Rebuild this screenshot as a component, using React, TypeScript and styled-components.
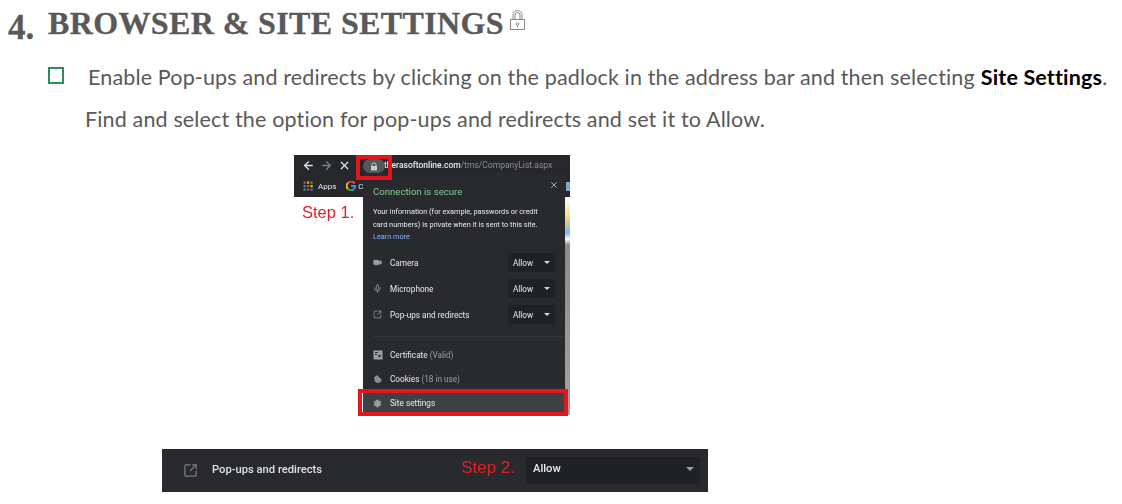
import styled, { createGlobalStyle } from "styled-components"
import { ArrowLeft, ArrowRight, Cookie, Mic, Settings, SquareArrowOutUpRight, Video, X } from "lucide-react"

const GlobalStyle = createGlobalStyle`
  html, body {
    margin: 0;
    padding: 0;
    background: #fff;
  }
`

const Page = styled.div`
  width: 1122px;
  height: 504px;
  overflow: hidden;
  display: flex;
  flex-direction: column;
  font-family: Lato, "Open Sans", sans-serif;
  color: #595959;
`

const Heading = styled.h1`
  display: flex;
  align-items: flex-start;
  margin: 0;
  padding: 5px 0 0 8px;
  height: 46px;
  box-sizing: border-box;
  font-family: "Liberation Serif", Georgia, serif;
  font-weight: bold;
  font-size: 32px;
  line-height: 36px;
  color: #595959;
  -webkit-text-stroke: 0.3px #595959;
`

const Number = styled.span`
  width: 40px;
  margin-top: 5px;
  font-size: 35px;
`

const HeadingText = styled.span`
  letter-spacing: 0.38px;
`

const HeadingLock = styled.svg`
  width: 19px;
  height: 22px;
  margin: 4px 0 0 4px;
`

const Bullet = styled.div`
  display: flex;
  align-items: center;
  height: 30px;
  margin-top: 16px;
  padding-left: 48px;
  font-size: 21.5px;
  letter-spacing: 0.15px;
  white-space: nowrap;
`

const Box = styled.span`
  width: 16px;
  height: 17px;
  margin: -4px 24px 0 0;
  border: 2px solid #2e8b57;
  box-sizing: border-box;
`

const Strong = styled.b`
  margin: 0 0 0 6px;
  color: #000;
`

const Para = styled.div`
  height: 30px;
  margin-top: 12px;
  padding-left: 85px;
  font-size: 21.5px;
  line-height: 30px;
  letter-spacing: 0.15px;
  white-space: nowrap;
`

const Shot = styled.div`
  position: relative;
  width: 276px;
  height: 260px;
  margin: 21px 0 0 294px;
  font-family: Roboto, sans-serif;
  filter: blur(0.35px);
`

const ToolbarTop = styled.div`
  display: flex;
  align-items: center;
  gap: 5px;
  height: 20px;
  padding-left: 8px;
  background: #26272a;
  color: #d8dadd;
`

const ToolbarIcon = styled.span<{ $dim?: boolean }>`
  display: flex;
  color: ${(p) => (p.$dim ? "#7b7d80" : "#e0e2e5")};
`

const Url = styled.span`
  margin-left: 28px;
  font-size: 8.5px;
  color: #8b8d90;
  white-space: nowrap;
`

const UrlHost = styled.span`
  color: #e8eaed;
  font-weight: 500;
`

const Bookmarks = styled.div`
  display: flex;
  align-items: center;
  height: 22px;
  padding-left: 9px;
  background: #26272a;
  font-size: 8px;
  color: #e8eaed;
`

const AppsGrid = styled.svg`
  width: 10px;
  height: 10px;
  margin-right: 5px;
`

const GoogleMark = styled.svg`
  width: 10px;
  height: 10px;
  margin: 0 2px 0 10px;
`

const BookmarkEnd = styled.span`
  width: 4px;
  height: 9px;
  margin-left: auto;
  background: #7fa6d6;
`

const ShotBody = styled.div`
  display: flex;
  justify-content: space-between;
  height: 218px;
  background: #fff;
`

const Step = styled.span`
  font-family: "Liberation Sans", Arial, sans-serif;
  font-size: 16.5px;
  line-height: 18px;
  color: #e3202a;
  white-space: nowrap;
`

const StepOne = styled(Step)`
  margin: 6px 0 0 8px;
`

const Sliver = styled.div`
  width: 5px;
  background: linear-gradient(#fff 0, #f4d98c 20px, #7fb7e6 36px, #fff 42px, #8f8b86 48px, #a5a29e 100%);
`

const Popup = styled.div`
  position: absolute;
  top: 18px;
  left: 69px;
  width: 202px;
  height: 242px;
  display: flex;
  flex-direction: column;
  background: #292a2d;
  color: #e8eaed;
`

const PopupClose = styled.span`
  position: absolute;
  top: 7px;
  right: 6px;
  display: flex;
  color: #c4c6c9;
`

const Secure = styled.div`
  margin: 12px 0 0 10px;
  font-size: 9.6px;
  line-height: 14px;
  color: #81c995;
`

const Info = styled.div`
  margin: 6px 8px 0 10px;
  font-size: 7.3px;
  line-height: 13px;
  white-space: nowrap;
`

const LearnMore = styled.div`
  margin-left: 10px;
  font-size: 7.3px;
  line-height: 11px;
  color: #8ab4f8;
`

const Permissions = styled.div`
  display: flex;
  flex-direction: column;
  gap: 7px;
  margin: 11px 0 0 10px;
  padding-bottom: 12px;
  border-bottom: 1px solid #36373a;
`

const PermissionRow = styled.div`
  display: flex;
  align-items: center;
  height: 19px;
  font-size: 8.2px;
`

const RowIcon = styled.span`
  display: flex;
  width: 17px;
  color: #9aa0a6;
`

const SmallSelect = styled.div`
  display: flex;
  align-items: center;
  justify-content: space-between;
  width: 47px;
  height: 19px;
  margin: 0 10px 0 auto;
  padding: 0 5px;
  box-sizing: border-box;
  background: #202124;
`

const Caret = styled.span<{ $size: number; $colour: string }>`
  width: 0;
  height: 0;
  border-left: ${(p) => p.$size}px solid transparent;
  border-right: ${(p) => p.$size}px solid transparent;
  border-top: ${(p) => p.$size}px solid ${(p) => p.$colour};
`

const InfoRow = styled.div<{ $active?: boolean }>`
  display: flex;
  align-items: center;
  height: 25px;
  padding-left: 10px;
  font-size: 8.2px;
  background: ${(p) => (p.$active ? "#3f4043" : "transparent")};
`

const FirstInfoRow = styled(InfoRow)`
  margin-top: 6px;
`

const Muted = styled.span`
  margin-left: 2px;
  color: #9aa0a6;
`

const Highlight = styled.div`
  position: absolute;
  box-sizing: border-box;
  border: 4px solid #e3161f;
`

const LockHighlight = styled(Highlight)`
  top: 0;
  left: 62px;
  width: 36px;
  height: 25px;
`

const LockPill = styled.span`
  position: absolute;
  top: 4px;
  left: 69px;
  width: 22px;
  height: 14px;
  display: flex;
  align-items: center;
  justify-content: center;
  border-radius: 7px;
  background: #55575a;
`

const PadLock = styled.svg`
  width: 8px;
  height: 9px;
`

const SiteHighlight = styled(Highlight)`
  top: 234px;
  left: 64px;
  width: 210px;
  height: 27px;
`

const Strip = styled.div`
  display: flex;
  align-items: center;
  width: 546px;
  height: 43px;
  margin: 34px 0 0 162px;
  padding: 0 8px 0 21px;
  box-sizing: border-box;
  background: #292a2d;
  font-family: Roboto, sans-serif;
  font-size: 11.2px;
  font-weight: 500;
  color: #dfe1e4;
  filter: blur(0.35px);
`

const StripLabel = styled.span`
  margin: -3px 0 0 14px;
`

const StepTwo = styled(Step)`
  margin: -5px 11px 0 auto;
  font-size: 17px;
  font-weight: 400;
`

const LargeSelect = styled.div`
  display: flex;
  align-items: center;
  justify-content: space-between;
  width: 174px;
  height: 27px;
  margin-top: -1px;
  padding: 0 6px 3px 7px;
  box-sizing: border-box;
  border-radius: 3px;
  background: #202124;
  color: #e8eaed;
`

const appColours = ["#ea4335", "#fbbc04", "#34a853", "#4285f4", "#ea4335", "#fbbc04", "#34a853", "#ea4335", "#4285f4"]

function CertificateIcon() {
  return (
    <svg width="10" height="10" viewBox="0 0 10 10">
      <rect x="0.5" y="0.5" width="9" height="9" fill="#9aa0a6" />
      <rect x="2" y="2" width="3" height="1" fill="#292a2d" />
      <rect x="2" y="4" width="2" height="1" fill="#292a2d" />
      <circle cx="6.5" cy="6" r="1.3" fill="#292a2d" />
    </svg>
  )
}

export default function App() {
  return (
    <Page>
      <GlobalStyle />
      <Heading>
        <Number>4.</Number>
        <HeadingText>BROWSER &amp; SITE SETTINGS</HeadingText>
        <HeadingLock viewBox="0 0 19 22" fill="none" stroke="#8a8a8a" strokeWidth="1">
          <path d="M5 10V6a4.500 4.500 0 0 1 9 0v4M7 10V6a2.500 2.500 0 0 1 5 0v4" />
          <rect x="2.500" y="10.500" width="14" height="10" />
          <circle cx="9.500" cy="15" r="1.300" />
          <path d="M9.500 16.300V18" />
        </HeadingLock>
      </Heading>
      <Bullet>
        <Box />
        Enable Pop-ups and redirects by clicking on the padlock in the address bar and then selecting
        <Strong>Site Settings</Strong>.
      </Bullet>
      <Para>Find and select the option for pop-ups and redirects and set it to Allow.</Para>
      <Shot>
        <ToolbarTop>
          <ToolbarIcon><ArrowLeft size={13} strokeWidth={2.4} /></ToolbarIcon>
          <ToolbarIcon $dim><ArrowRight size={13} strokeWidth={2.4} /></ToolbarIcon>
          <ToolbarIcon><X size={13} strokeWidth={2.4} /></ToolbarIcon>
          <Url>
            <UrlHost>therasoftonline.com</UrlHost>/tms/CompanyList.aspx
          </Url>
        </ToolbarTop>
        <Bookmarks>
          <AppsGrid viewBox="0 0 10 10">
            {appColours.map((colour, i) => (
              <rect key={i} x={(i % 3) * 3.5 + 0.5} y={Math.floor(i / 3) * 3.5 + 0.5} width="2.200" height="2.200" fill={colour} />
            ))}
          </AppsGrid>
          Apps
          <GoogleMark viewBox="0 0 10 10" fill="none" strokeWidth="2">
            <path d="M8.600 2.600A4 4 0 0 0 2 2" stroke="#ea4335" />
            <path d="M2 2a4 4 0 0 0 0 6" stroke="#fbbc04" />
            <path d="M2 8a4 4 0 0 0 6 0" stroke="#34a853" />
            <path d="M8 8a4 4 0 0 0 1-3H5" stroke="#4285f4" />
          </GoogleMark>
          C
          <BookmarkEnd />
        </Bookmarks>
        <ShotBody>
          <StepOne>Step 1.</StepOne>
          <Sliver />
        </ShotBody>
        <Popup>
          <PopupClose><X size={10} /></PopupClose>
          <Secure>Connection is secure</Secure>
          <Info>
            Your information (for example, passwords or credit
            <br />
            card numbers) is private when it is sent to this site.
          </Info>
          <LearnMore>Learn more</LearnMore>
          <Permissions>
            <PermissionRow>
              <RowIcon><Video size={9} fill="#9aa0a6" /></RowIcon>
              Camera
              <SmallSelect>Allow<Caret $size={3} $colour="#d5d7da" /></SmallSelect>
            </PermissionRow>
            <PermissionRow>
              <RowIcon><Mic size={9} /></RowIcon>
              Microphone
              <SmallSelect>Allow<Caret $size={3} $colour="#d5d7da" /></SmallSelect>
            </PermissionRow>
            <PermissionRow>
              <RowIcon><SquareArrowOutUpRight size={9} /></RowIcon>
              Pop-ups and redirects
              <SmallSelect>Allow<Caret $size={3} $colour="#d5d7da" /></SmallSelect>
            </PermissionRow>
          </Permissions>
          <FirstInfoRow>
            <RowIcon><CertificateIcon /></RowIcon>
            Certificate<Muted>(Valid)</Muted>
          </FirstInfoRow>
          <InfoRow>
            <RowIcon><Cookie size={10} fill="#9aa0a6" stroke="#292a2d" /></RowIcon>
            Cookies<Muted>(18 in use)</Muted>
          </InfoRow>
          <InfoRow $active>
            <RowIcon><Settings size={9} fill="#9aa0a6" /></RowIcon>
            Site settings
          </InfoRow>
        </Popup>
        <LockPill>
          <PadLock viewBox="0 0 8 9" fill="none" stroke="#c8cacd">
            <path d="M2 4V2.800a2 2 0 0 1 4 0V4" />
            <rect x="1" y="4" width="6" height="4.500" fill="#c8cacd" stroke="none" />
          </PadLock>
        </LockPill>
        <LockHighlight />
        <SiteHighlight />
      </Shot>
      <Strip>
        <ToolbarIcon $dim><SquareArrowOutUpRight size={15} /></ToolbarIcon>
        <StripLabel>Pop-ups and redirects</StripLabel>
        <StepTwo>Step 2.</StepTwo>
        <LargeSelect>Allow<Caret $size={4} $colour="#9aa0a6" /></LargeSelect>
      </Strip>
    </Page>
  )
}
